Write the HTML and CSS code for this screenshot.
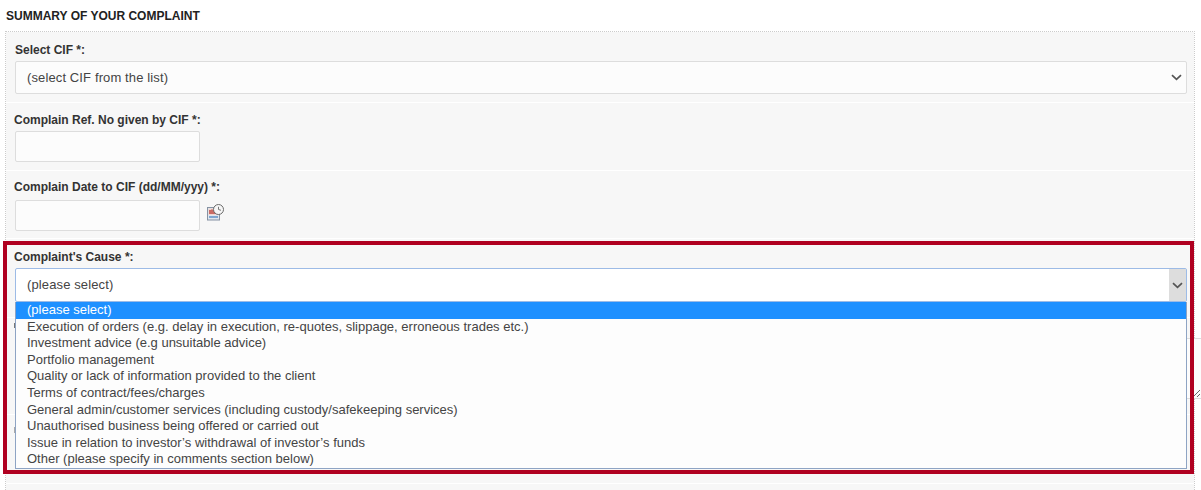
FILE: index.html
```html
<!DOCTYPE html>
<html lang="en">
<head>
    <meta charset="UTF-8">
    <title>Summary of your complaint</title>
    <link rel="stylesheet" href="styles.css">
</head>
<body>

    <h2 class="title">SUMMARY OF YOUR COMPLAINT</h2>

    <div class="panel">
        <div class="field field-cif">
            <label class="label label-cif">Select CIF *:</label>
            <div class="select-box">
                <span>(select CIF from the list)</span>
                <svg class="chevron" width="11" height="7" viewBox="0 0 11 7"><path d="M1 1.2 L5.5 5.4 L10 1.2" fill="none" stroke="#555" stroke-width="1.7"/></svg>
            </div>
        </div>

        <div class="field field-ref">
            <label class="label">Complain Ref. No given by CIF *:</label>
            <input class="text-input" type="text">
        </div>

        <div class="field field-date">
            <label class="label label-date">Complain Date to CIF (dd/MM/yyy) *:</label>
            <div class="date-row">
                <input class="text-input" type="text">
                <svg class="date-icon" width="17" height="17" viewBox="0 0 17 17">
                    <rect x="0.5" y="3.5" width="12" height="12.5" fill="#dfe6ee" stroke="#8592a3"/>
                    <rect x="1.5" y="4.5" width="10" height="6.5" fill="#f0d5d0"/>
                    <path d="M3 6 V10 M5 5.5 V10 M7 6 V10" stroke="#b5332a" stroke-width="1.3"/>
                    <path d="M2 13 H11" stroke="#7ea6d0" stroke-width="2"/>
                    <circle cx="11.5" cy="5.5" r="5" fill="#f6f6f6" stroke="#6a6a6a"/>
                    <path d="M11.5 2.8 V5.5 L14 6.3" fill="none" stroke="#777"/>
                </svg>
            </div>
        </div>

        <div class="field field-cause">
            <label class="label">Complaint's Cause *:</label>
            <div class="select-box select-open">
                <span class="select-text">(please select)</span>
                <span class="arrow-box">
                    <svg class="chevron" width="11" height="7" viewBox="0 0 11 7"><path d="M1 1.2 L5.5 5.4 L10 1.2" fill="none" stroke="#555" stroke-width="1.7"/></svg>
                </span>
            </div>
        </div>

        <!-- labels of these two rows are covered by the open dropdown, only an edge shows -->
        <div class="field field-comments">
            <span class="label-edge"></span>
            <textarea class="comments"></textarea>
        </div>

        <div class="field field-last">
            <span class="label-edge label-edge-light"></span>
        </div>

        <div class="field field-end"></div>
    </div>

    <!-- open dropdown of the cause select -->
    <ul class="options">
        <li class="selected">(please select)</li>
        <li>Execution of orders (e.g. delay in execution, re-quotes, slippage, erroneous trades etc.)</li>
        <li>Investment advice (e.g unsuitable advice)</li>
        <li>Portfolio management</li>
        <li>Quality or lack of information provided to the client</li>
        <li>Terms of contract/fees/charges</li>
        <li>General admin/customer services (including custody/safekeeping services)</li>
        <li>Unauthorised business being offered or carried out</li>
        <li>Issue in relation to investor’s withdrawal of investor’s funds</li>
        <li>Other (please specify in comments section below)</li>
    </ul>

    <!-- red annotation frame -->
    <div class="highlight"></div>

</body>
</html>
```

FILE: styles.css
```css
html, body {
    height: 490px;
    overflow: hidden;
}

body {
    background-color: #fff;
    color: #333;
    font-family: 'Liberation Sans', Arial, sans-serif;
    font-size: 12px;
    margin: 0;
    padding: 0;
    position: relative;
}

.title {
    font-size: 12px;
    font-weight: bold;
    color: #222;
    margin: 0;
    padding: 9px 0 0 6px;
    height: 22px;
    line-height: 14px;
    box-sizing: border-box;
}

.panel {
    margin-left: 5px;
    width: 1190px;
    box-sizing: border-box;
    border-top: 1px dotted #ccc;
    border-left: 1px dotted #ccc;
    border-right: 1px dotted #ccc;
    margin-top: 9px;
}

.field {
    background-color: #f7f7f7;
    border-bottom: 1px solid #fff;
    box-sizing: border-box;
    padding-left: 8px;
    padding-right: 7px;
}

.label {
    display: block;
    font-weight: bold;
    color: #333;
    line-height: 14px;
    margin-bottom: 4px;
}

.label-cif {
    margin-left: 1px;
}

.label-date {
    margin-bottom: 6px;
}

.field-cif {
    height: 71px;
    padding-top: 11px;
}

.field-ref {
    height: 68px;
    padding-top: 10px;
}

.field-date {
    height: 68px;
    padding-top: 9px;
}

.field-cause {
    height: 79px;
    padding-top: 11px;
}

.field-comments {
    height: 97px;
    padding-top: 5px;
}

.field-last {
    height: 69px;
    padding-top: 12px;
}

.field-end {
    height: 10px;
}

.label-edge {
    display: block;
    width: 2px;
    height: 5px;
    margin-bottom: 10px;
    background-color: #777;
}

.label-edge-light {
    height: 6px;
    background-color: #aaa;
}

.select-box {
    margin-left: 1px;
    height: 33px;
    box-sizing: border-box;
    background-color: #fcfcfc;
    border: 1px solid #ddd;
    border-radius: 2px;
    padding-left: 11px;
    padding-right: 4px;
    display: flex;
    align-items: center;
    justify-content: space-between;
    color: #444;
    font-size: 13px;
    letter-spacing: 0.12px;
}

.select-open {
    height: 34px;
    background-color: #fff;
    border: 1px solid #9dbbe6;
    padding-right: 0;
}

.select-text {
    margin-bottom: 2px;
}

.arrow-box {
    width: 17px;
    height: 32px;
    background-color: #ddd;
    display: flex;
    align-items: center;
    justify-content: center;
}

.text-input {
    display: block;
    margin: 0 0 0 1px;
    width: 185px;
    height: 31px;
    box-sizing: border-box;
    background-color: #fcfcfc;
    border: 1px solid #ddd;
    border-radius: 2px;
    padding: 0;
}

.date-row {
    display: flex;
    align-items: flex-start;
    gap: 7px;
}

.date-icon {
    margin-top: 4px;
}

.comments {
    display: block;
    margin: 0 0 0 1px;
    width: 1186px;
    height: 61px;
    box-sizing: border-box;
    background-color: #fcfcfc;
    border: 1px solid #ddd;
    border-right: none;
    padding: 0;
}

.options {
    position: absolute;
    left: 15px;
    top: 302px;
    width: 1172px;
    box-sizing: border-box;
    margin: 0;
    padding: 0 0 0.5px;
    list-style: none;
    background-color: #fdfdfd;
    border: 1px solid #8ea4c4;
    border-top: none;
    color: #444;
    font-size: 13px;
}

.options li {
    height: 16.55px;
    line-height: 16.55px;
    padding-left: 11px;
}

.options .selected {
    background-color: #1e90ff;
    color: #fff;
    height: 16.8px;
    line-height: 16.8px;
}

.highlight {
    position: absolute;
    left: 3px;
    top: 241px;
    width: 1191px;
    height: 233px;
    box-sizing: border-box;
    border: 4px solid #b00020;
}
```
